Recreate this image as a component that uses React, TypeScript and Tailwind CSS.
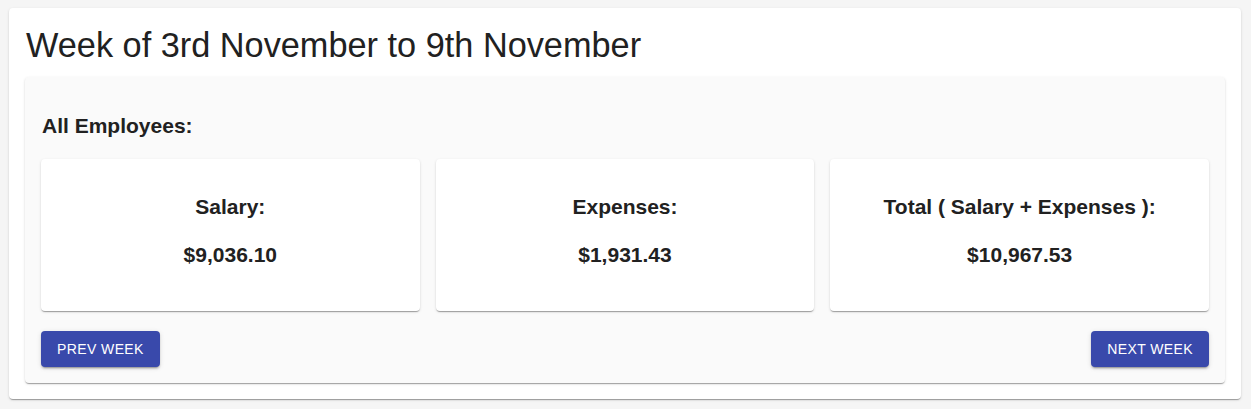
import React from 'react'

const cardShadow =
  'shadow-[0px_2px_1px_-1px_rgba(0,0,0,0.2),0px_1px_1px_0px_rgba(0,0,0,0.14),0px_1px_3px_0px_rgba(0,0,0,0.12)]'

const totals = [
  { label: 'Salary:', value: '$9,036.10' },
  { label: 'Expenses:', value: '$1,931.43' },
  { label: 'Total ( Salary + Expenses ):', value: '$10,967.53' },
]

const WeekButton = ({ children }: { children: React.ReactNode }) => (
  <button className="h-9 rounded bg-[#3949ab] px-4 text-[14px] font-medium uppercase leading-[24px] tracking-[0.4px] text-white shadow-[0px_3px_1px_-2px_rgba(0,0,0,0.2),0px_2px_2px_0px_rgba(0,0,0,0.14),0px_1px_5px_0px_rgba(0,0,0,0.12)]">
    {children}
  </button>
)

const App = () => {
  return (
    <div className="min-h-[409px] bg-[#f5f5f5] pl-[9px] pr-[10px] pt-2 font-['Liberation_Sans',Arial,sans-serif] text-[#212121]">
      <div className={`rounded bg-white p-4 ${cardShadow}`}>
        <h1 className="mb-[11px] pl-px text-[34.3px] font-normal leading-[42px]">
          Week of 3rd November to 9th November
        </h1>

        <div className={`rounded bg-[#fafafa] px-4 pb-4 pt-4 ${cardShadow}`}>
          <h2 className="my-[17px] pl-px text-[21px] font-bold leading-[32px]">All Employees:</h2>

          <div className="grid grid-cols-3 gap-4">
            {totals.map((t) => (
              <div
                key={t.label}
                className={`flex h-[152px] flex-col items-center gap-4 rounded bg-white pb-10 pt-8 ${cardShadow}`}
              >
                <div className="text-[21px] font-bold leading-[32px]">{t.label}</div>
                <div className="text-[21px] font-bold leading-[32px]">{t.value}</div>
              </div>
            ))}
          </div>

          <div className="mt-5 flex justify-between">
            <WeekButton>Prev Week</WeekButton>
            <WeekButton>Next Week</WeekButton>
          </div>
        </div>
      </div>
    </div>
  )
}

export default App
